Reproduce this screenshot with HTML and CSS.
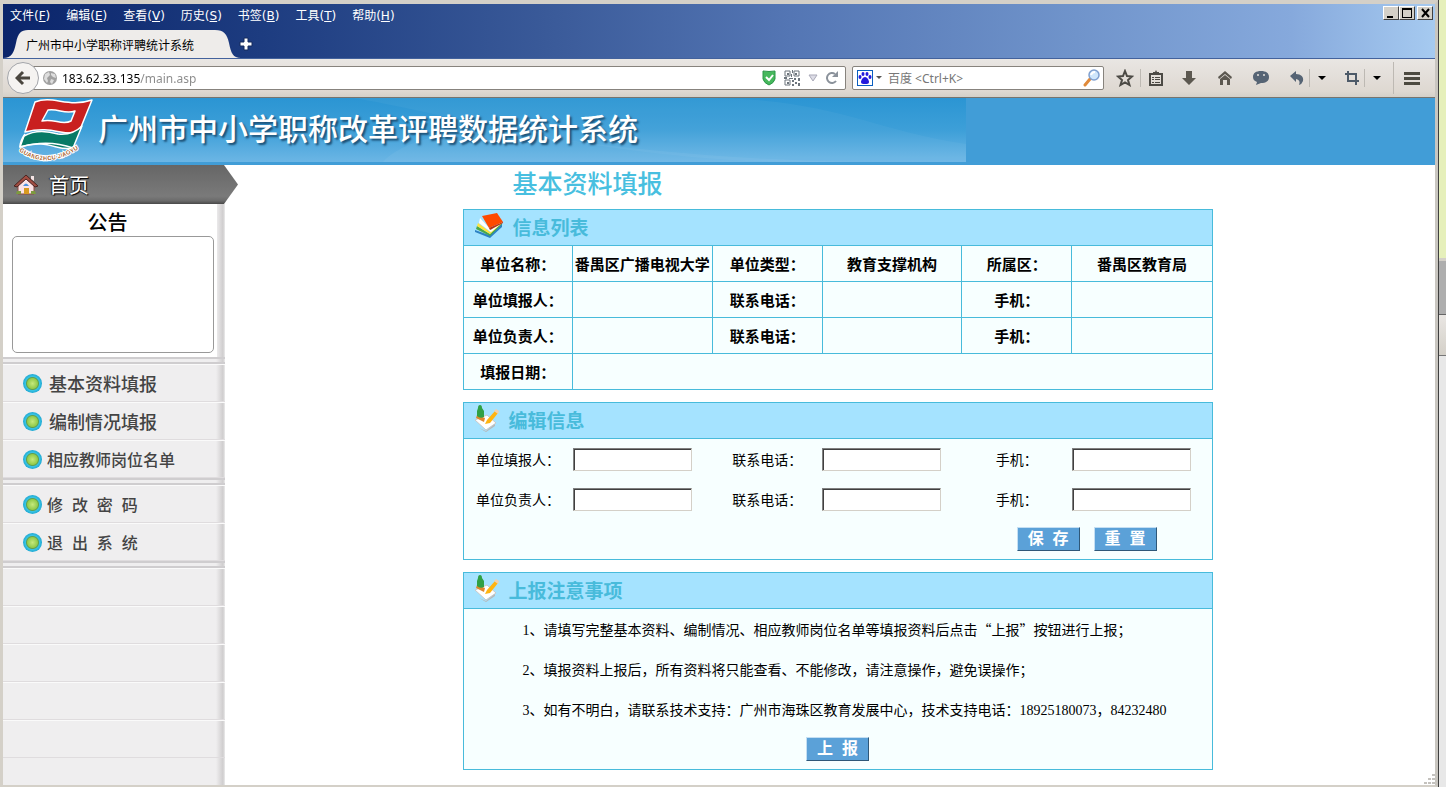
FILE: index.html
```html
<!DOCTYPE html>
<html lang="zh-CN">
<head>
<meta charset="utf-8">
<title>广州市中小学职称评聘统计系统</title>
<link rel="stylesheet" href="styles.css">
</head>
<body>
<div class="window">
<div class="titlebar">
    <div class="menu-row">
        <div class="menu">
            <button type="button">文件(<u>F</u>)</button>
            <button type="button">编辑(<u>E</u>)</button>
            <button type="button">查看(<u>V</u>)</button>
            <button type="button">历史(<u>S</u>)</button>
            <button type="button">书签(<u>B</u>)</button>
            <button type="button">工具(<u>T</u>)</button>
            <button type="button">帮助(<u>H</u>)</button>
        </div>
        <div class="window-buttons">
            <button type="button" aria-label="最小化"><svg width="12" height="10"><path d="M2 8h6v2H2z"/></svg></button>
            <button type="button" aria-label="最大化"><svg width="12" height="10"><path d="M1 0h10v10H1zM2 2v7h8V2z" fill-rule="evenodd"/></svg></button>
            <button type="button" class="close" aria-label="关闭"><svg width="12" height="10"><path d="M3 1l7 8M10 1l-7 8" stroke="#000" stroke-width="2"/></svg></button>
        </div>
    </div>
    <div class="tab-row">
        <button type="button" class="tab">
            <svg class="tab-shape" viewBox="0 0 238 28"><path d="M0 28C9 28 11 22 13 13C15 3 18 0 25 0H212C221 0 224 4 226 13C228 23 230 28 238 28Z" fill="#eeecea"/></svg>
            <span>广州市中小学职称评聘统计系统</span>
        </button>
        <button type="button" class="new-tab" aria-label="新标签页"><svg width="14" height="14"><path d="M5 1h4v4h4v4H9v4H5V9H1V5h4z" fill="#fff" stroke="#142a5c"/></svg></button>
    </div>
</div>

<div class="toolbar">
    <button type="button" class="back" aria-label="后退"><svg width="16" height="16"><path d="M8 2L2 8l6 6M3 8h12" fill="none" stroke="#4a463f" stroke-width="3"/></svg></button>
    <div class="field url-field">
        <svg width="14" height="14"><circle cx="7" cy="7" r="7" fill="#a0a0a0"/><path d="M2 3l4-2 1 3-3 3 1 3-1 2-3-4zM8 2l4 1 1 4-3-1-2-2zM8 8l3 1-2 4-2-2z" fill="#ddd"/></svg>
        <input type="text" class="url" aria-label="地址" value="183.62.33.135/main.asp">
        <svg width="14" height="16"><path d="M1 1Q7 2 13 1V9Q12 13 7 15Q2 13 1 9Z" fill="#46b85c" stroke="#2b9648"/><path d="M4 7l3 3 4-5" fill="none" stroke="#fff" stroke-width="2"/></svg>
        <svg width="16" height="16" viewBox="0 0 16 16"><path d="M1 1h5v5H1zM10 1h5v5h-5zM1 10h5v5H1z" fill="none" stroke="#6d757d" stroke-width="1"/><path d="M3 3h2v2H3zM11 3h2v2h-2zM3 12h2v2H3zM8 0h1v3H8zM7 4h1v3H7zM0 7h3v2H0zM5 8h4v1H5zM10 8h2v2h-2zM14 8h2v3h-2zM8 10h2v2H8zM11 12h2v2h-2zM8 14h2v2H8zM14 13h2v3h-2z" fill="#6d757d"/></svg>
        <svg width="10" height="8"><path d="M1 1h8L5 7z" fill="#dcdce6" stroke="#a9a9b8"/></svg>
        <svg class="reload" width="14" height="14"><path d="M10 10A5 5 0 1 1 9 3" fill="none" stroke="#8b929b" stroke-width="2"/><path d="M12 0v6H6z" fill="#8b929b"/></svg>
    </div>
    <div class="field search-field">
        <button type="button" class="engine" aria-label="搜索引擎">
            <svg width="16" height="16"><path d="M0 0h16v16H0z" fill="#0a5fc0"/><path d="M1 1h14v14H1z" fill="#fff"/><g fill="#2319dc"><ellipse cx="6" cy="4" rx="1.5" ry="2"/><ellipse cx="10" cy="4" rx="1.5" ry="2"/><ellipse cx="3" cy="7" rx="1.5" ry="2"/><ellipse cx="13" cy="7" rx="1.5" ry="2"/><path d="M8 7c2 0 4 3 4 5s-2 2-4 2-4 0-4-2 2-5 4-5z"/></g></svg>
            <svg width="6" height="4"><path d="M0 0h6L3 3z" fill="#555"/></svg>
        </button>
        <input type="text" aria-label="搜索" placeholder="百度 &lt;Ctrl+K&gt;">
        <svg width="18" height="18"><path d="M2 16l5-6" stroke="#e08a3a" stroke-width="3" stroke-linecap="round"/><circle cx="11" cy="6" r="5" fill="#cfe6fb" stroke="#7f9fcf" stroke-width="1.500"/><path d="M8 6q1-3 4-3" fill="none" stroke="#fff" stroke-width="2"/></svg>
    </div>
    <button type="button" class="tool tool-star" aria-label="收藏"><svg width="18" height="18"><path d="M9 2l2 5 5 .5-4 3.500 1.500 5L9 13.500 4.500 16 6 11 2 7.500 7 7z" fill="none" stroke="#4c4a45" stroke-width="2"/></svg></button>
    <i class="sep"></i>
    <button type="button" class="tool tool-list" aria-label="书签列表"><svg width="16" height="16"><path d="M2 4h12v11H2z" fill="none" stroke="#4c4a45" stroke-width="2"/><path d="M5 2h2l1-2 1 2h2v3H5zM4 7h2v1H4zM7 7h5v1H7zM4 9h2v1H4zM7 9h5v1H7zM4 12h2v1H4zM7 12h5v1H7z" fill="#4c4a45"/></svg></button>
    <button type="button" class="tool" aria-label="下载"><svg width="16" height="16"><path d="M5 1h6v7h4l-7 7-7-7h4z" fill="#5c5850"/></svg></button>
    <button type="button" class="tool" aria-label="主页"><svg width="16" height="16"><path d="M8 1l7 6-1 2-6-5-6 5-1-2z" fill="#5c5850"/><path d="M8 5l5 4v6h-3v-5H6v5H3V9z" fill="#5c5850"/></svg></button>
    <button type="button" class="tool" aria-label="聊天"><svg width="18" height="16"><path d="M9 1c5 0 8 2 8 6s-3 6-8 6l-5 2 1-3C2 11 1 9 1 7c0-4 3-6 8-6z" fill="#566474"/><circle cx="6" cy="5" r="1" fill="#e4e0dc"/><circle cx="12" cy="5" r="1" fill="#e4e0dc"/></svg></button>
    <button type="button" class="tool tool-split" aria-label="撤销"><svg width="16" height="16"><path d="M1 6l6-5v3c5 0 8 3 7 7q-1 3-4 4 2-5-3-6v3z" fill="#566474"/></svg></button>
    <i class="sep"></i>
    <button type="button" class="caret" aria-label="更多撤销"><svg width="8" height="5"><path d="M0 0h8L4 4z"/></svg></button>
    <button type="button" class="tool tool-split" aria-label="截图"><svg width="16" height="16"><path d="M4 1v10h11M1 4h11v11" fill="none" stroke="#4d5a68" stroke-width="2"/></svg></button>
    <i class="sep"></i>
    <button type="button" class="caret" aria-label="更多截图"><svg width="8" height="5"><path d="M0 0h8L4 4z"/></svg></button>
    <i class="sep sep-tall"></i>
    <button type="button" class="tool" aria-label="菜单"><svg width="16" height="13"><path d="M0 0h16v3H0zM0 5h16v3H0zM0 10h16v3H0z" fill="#4c4a40"/></svg></button>
</div>

<div class="page">
    <div class="banner">
        <div class="banner-picture">
            <svg class="banner-waves" viewBox="0 0 963 64" preserveAspectRatio="none"><path d="M350 0C430 12 600 64 800 64H963V46C860 30 830 0 700 0Z" fill="#fff" opacity=".04"/><path d="M480 30Q680 62 860 64H380Q400 40 480 30Z" fill="#fff" opacity=".05"/></svg>
            <svg class="logo" viewBox="0 0 80 64" width="80" height="64">
                <g stroke="#fff" stroke-width="1.500" stroke-linejoin="round">
                    <path d="M17 4C35-3 50 10 74 2L61 34C45 39 35 27 7 34ZM30 12L24 23C36 20 44 28 53 23L57 13C47 17 40 10 30 12Z" fill="#c9201f" fill-rule="evenodd"/>
                    <path d="M6 38C18 31 30 33 40 36C50 37 58 34 64 28L55 50C40 54 30 40 2 49Z" fill="#087a66"/>
                    <path d="M7 36Q2 43 2 49Q30 41 55 50" fill="none"/>
                </g>
                <path id="logo-arc" d="M1 53Q30 74 66 47" fill="none"/>
                <text class="logo-text"><textPath href="#logo-arc">GUANGZHOU·JIAOYU</textPath></text>
            </svg>
            <h1>广州市中小学职称改革评聘数据统计系统</h1>
        </div>
    </div>
    <div class="columns">
        <div class="sidebar">
            <a class="home" href="#">
                <svg width="26" height="22" viewBox="0 0 26 22"><path d="M5 10l8-8 8 8v10H5z" fill="#fbe3e6" stroke="#8d4a42"/><path d="M1 12L13 1l12 11-3 1-9-8-9 8z" fill="#a04d42" stroke="#4a2320"/><path d="M18 2h3v5l-3-2z" fill="#f4e4e4"/><path d="M11 14h5v6h-5z" fill="#d89a20"/><path d="M10 12q3-5 6 0z" fill="#4d93e0"/><path d="M3 20h5v-3H4zM18 20h5l-1-3h-4z" fill="#7d9b3f"/></svg>
                首页
            </a>
            <div class="sidebar-body">
                <div class="notice">
                    <h2>公告</h2>
                    <div class="notice-box"></div>
                </div>
                <ul class="nav">
                    <li><a class="large" href="#"><i class="dot"></i>基本资料填报</a></li>
                    <li><a class="large" href="#"><i class="dot"></i>编制情况填报</a></li>
                    <li><a href="#"><i class="dot"></i>相应教师岗位名单</a></li>
                </ul>
                <ul class="nav">
                    <li><a href="#"><i class="dot"></i>修&nbsp;&nbsp;改&nbsp;&nbsp;密&nbsp;&nbsp;码</a></li>
                    <li><a href="#"><i class="dot"></i>退&nbsp;&nbsp;出&nbsp;&nbsp;系&nbsp;&nbsp;统</a></li>
                </ul>
                <ul class="nav">
                    <li></li>
                    <li></li>
                    <li></li>
                    <li></li>
                    <li></li>
                </ul>
            </div>
        </div>

        <div class="main">
            <h2 class="page-title">基本资料填报</h2>

            <div class="panel">
                <h3>
                    <svg width="30" height="28" viewBox="0 0 30 28"><path d="M1 19l14 5 13-12v4L16 27 1 21z" fill="#2c82c4"/><path d="M3 15l13 8 12-12v2L16 25 2 18z" fill="#4aa84a"/><path d="M4 12l12 9 12-11v2L16 23 3 15z" fill="#ffe43a"/><path d="M6 7l11 12 11-9v2L17 21 5 12z" fill="#fff"/><path d="M8 5l15-3 6 9-14 6z" fill="#ff4a00"/><path d="M15 17l14-6v1l-13 7z" fill="#b93010"/></svg>
                    <span>信息列表</span>
                </h3>
                <table class="info">
                    <colgroup><col class="col-first"><col><col class="col-label"><col><col class="col-label"><col></colgroup>
                    <tr>
                        <th>单位名称：</th><td>番禺区广播电视大学</td>
                        <th>单位类型：</th><td>教育支撑机构</td>
                        <th>所属区：</th><td>番禺区教育局</td>
                    </tr>
                    <tr>
                        <th>单位填报人：</th><td></td>
                        <th>联系电话：</th><td></td>
                        <th>手机：</th><td></td>
                    </tr>
                    <tr>
                        <th>单位负责人：</th><td></td>
                        <th>联系电话：</th><td></td>
                        <th>手机：</th><td></td>
                    </tr>
                    <tr>
                        <th>填报日期：</th><td colspan="5"></td>
                    </tr>
                </table>
            </div>

            <form class="panel">
                <h3>
                    <svg width="26" height="28" viewBox="0 0 26 28"><path d="M1 16l12-5 9 8-10 7z" fill="#fff" stroke="#c9c9c9"/><path d="M5 24l7 3 9-7v2l-9 6z" fill="#b8b8b8"/><path d="M3 11l8 3-1 4-8-4z" fill="#e0872c"/><path d="M4 4q0-3 2-3t2 3l2 3v6q-4 2-7-1V7z" fill="#2fa045"/><path d="M13 16l8-9 3 2-8 10-5 1z" fill="#ffb412"/><path d="M20 7l2-2 3 2-1 3z" fill="#f3cfae"/></svg>
                    <span>编辑信息</span>
                </h3>
                <div class="fields">
                    <label for="reporter">单位填报人：</label><input type="text" id="reporter">
                    <label for="reporter-tel">联系电话：</label><input type="text" id="reporter-tel">
                    <label for="reporter-mobile">手机：</label><input type="text" id="reporter-mobile">
                    <label for="leader">单位负责人：</label><input type="text" id="leader">
                    <label for="leader-tel">联系电话：</label><input type="text" id="leader-tel">
                    <label for="leader-mobile">手机：</label><input type="text" id="leader-mobile">
                </div>
                <div class="actions actions-right">
                    <button type="button" class="btn">保&nbsp;&nbsp;存</button>
                    <button type="reset" class="btn">重&nbsp;&nbsp;置</button>
                </div>
            </form>

            <div class="panel">
                <h3>
                    <svg width="26" height="28" viewBox="0 0 26 28"><path d="M1 16l12-5 9 8-10 7z" fill="#fff" stroke="#c9c9c9"/><path d="M5 24l7 3 9-7v2l-9 6z" fill="#b8b8b8"/><path d="M3 11l8 3-1 4-8-4z" fill="#e0872c"/><path d="M4 4q0-3 2-3t2 3l2 3v6q-4 2-7-1V7z" fill="#2fa045"/><path d="M13 16l8-9 3 2-8 10-5 1z" fill="#ffb412"/><path d="M20 7l2-2 3 2-1 3z" fill="#f3cfae"/></svg>
                    <span>上报注意事项</span>
                </h3>
                <div class="notes">
                    <p><span class="num">1</span>、请填写完整基本资料、编制情况、相应教师岗位名单等填报资料后点击“上报”按钮进行上报；</p>
                    <p><span class="num">2</span>、填报资料上报后，所有资料将只能查看、不能修改，请注意操作，避免误操作；</p>
                    <p><span class="num">3</span>、如有不明白，请联系技术支持：广州市海珠区教育发展中心，技术支持电话：<span class="num">18925180073</span>，<span class="num">84232480</span></p>
                </div>
                <div class="actions">
                    <button type="button" class="btn">上&nbsp;&nbsp;报</button>
                </div>
            </div>
        </div>
    </div>
    <svg class="grip" width="12" height="10"><path d="M9 0h3v2H9zM5 4h3v2H5zM9 4h3v2H9zM1 8h3v2H1zM5 8h3v2H5zM9 8h3v2H9z" fill="#c4c2be"/></svg>
</div>
</div>

<!-- the edge of the window behind -->
<div class="behind">
    <div class="behind-top"></div>
    <div class="behind-title"></div>
    <div class="behind-toolbar"></div>
</div>
</body>
</html>
```

FILE: styles.css
```css
* { box-sizing: border-box; }
body {
    margin: 0; min-height: 100vh; display: flex; background: #e8e8e8;
    font-family: "Liberation Sans", "Noto Sans CJK SC", sans-serif; font-size: 14px; color: #000;
}
h1, h2, h3, p, ul { margin: 0; padding: 0; }
button { margin: 0; padding: 0; border: 0; background: none; font-family: inherit; }
svg { display: block; flex: none; }
a { text-decoration: none; }

/* browser window */
.window { flex: 1; display: flex; flex-direction: column; border: solid #d4d0c8; border-width: 4px 3px 2px 3px; border-right-color: #c9c6c0; }
.titlebar { background: linear-gradient(to right, #0a246a 0%, #1d3c80 18%, #3a5a99 38%, #5476b4 55%, #7094cb 75%, #86a9dc 90%, #a6caf0 100%); border-bottom: 1px solid #43629c; }
.menu-row { display: flex; justify-content: space-between; height: 26px; }
.menu { display: flex; gap: 16px; padding-left: 7px; height: 20px; }
.menu button { font: 12px "DejaVu Sans", "Noto Sans CJK SC", sans-serif; color: #fff; }
.window-buttons { display: flex; padding: 2px 2px 0 0; }
.window-buttons button { width: 16px; height: 14px; padding: 1px; background: #d4d0c8; border: 1px solid; border-color: #fff #404040 #404040 #fff; }
.window-buttons .close { margin-left: 2px; }
.tab-row { display: flex; align-items: center; height: 28px; }
.tab { position: relative; width: 238px; height: 28px; padding-left: 23px; text-align: left; font-size: 12px; }
.tab-shape { position: absolute; left: 0; top: 0; width: 100%; height: 100%; }
.tab span { position: relative; }
.new-tab { margin-left: -2px; }

.toolbar { display: flex; align-items: center; height: 39px; padding: 0 5px 0 4px; background: linear-gradient(#e9e6e3, #ded8d1 85%, #d4d0c8); border-bottom: 1px solid #77746e; }
.back { position: relative; z-index: 1; display: flex; align-items: center; justify-content: center; width: 32px; height: 32px; background: #f5f3f1; border: 1px solid #a3a5aa; border-radius: 50%; }
.field { display: flex; align-items: center; height: 24px; background: #fff; border: 1px solid #87837d; border-radius: 2px; }
.field input { flex: 1; min-width: 0; height: 20px; padding: 0; border: 0; outline: 0; background: none; font: 12px "Noto Sans", "Noto Sans CJK SC", sans-serif; }
.url-field { flex: 1; margin-left: -8px; padding: 0 5px 0 11px; gap: 8px; }
/* host in black, path in grey */
.field .url { margin-left: -3px; background: linear-gradient(to right, #000 78px, #8a8a8a 78px); -webkit-background-clip: text; background-clip: text; color: transparent; }
.search-field { width: 252px; margin-left: 6px; padding: 0 2px 0 4px; }
.search-field input::placeholder { color: #777; opacity: 1; }
.engine { display: flex; align-items: center; gap: 3px; margin-right: 6px; }
.tool, .caret { display: flex; align-items: center; justify-content: center; height: 30px; width: 36px; }
.tool-star { width: 30px; margin-left: 6px; }
.tool-list { width: 30px; }
.tool-split { width: 24px; margin-left: 6px; }
.caret { width: 24px; }
.sep { width: 1px; height: 18px; background: #bdb9b3; }
.sep-tall { height: 32px; margin-left: 4px; }

/* page */
.page { position: relative; flex: 1; display: flex; flex-direction: column; background: #fff; }
.grip { position: absolute; right: 0; bottom: 1px; }
.banner { height: 67px; padding-bottom: 3px; background: #419dd7; }
.banner-picture { position: relative; display: flex; align-items: center; max-width: 963px; height: 64px; padding-left: 15px; background: linear-gradient(#2b95d3, #3d9fd8 50%, #6cb6e5); }
.banner-waves { position: absolute; left: 0; top: 0; width: 100%; height: 100%; }
.logo { position: relative; }
.logo-text { font-size: 6px; font-weight: bold; fill: #a8622c; stroke: #fff; stroke-width: 2px; paint-order: stroke; }
.banner h1 { position: relative; font-size: 30px; font-weight: 500; line-height: 64px; color: #fff; white-space: nowrap; text-shadow: 2px 2px 2px #1c4f74; }
.columns { flex: 1; display: flex; }

.sidebar { flex: none; display: flex; flex-direction: column; width: 237px; }
.home {
    display: flex; align-items: center; gap: 10px; width: 235px; height: 39px; padding-left: 10px;
    background: linear-gradient(#666, #7a7a7a 80%, #6a6a6a 92%, #484848);
    clip-path: polygon(0 0, 221px 0, 100% 50%, 221px 100%, 0 100%);
    font-size: 20px; color: #fff; text-shadow: 1px 1px 1px #000, -1px 0 1px #222;
}
.sidebar-body { flex: 1; width: 222px; background: linear-gradient(to right, transparent 213px, #cfcdce 220px, #ececec 222px), #efeeef; }
.notice { height: 153px; padding: 6px 0 0 9px; margin-right: 8px; background: #fff; }
.notice h2 { padding-right: 14px; font-size: 20px; font-weight: 500; line-height: 26px; text-align: center; }
.notice-box { width: 202px; height: 117px; border: 1px solid #999; border-radius: 5px; background: #fff; }
.nav { list-style: none; border-top: 7px double #cfcdcf; }
.nav li { height: 38px; border-top: 1px solid #fafafa; border-bottom: 1px solid #dfdcde; }
.nav a { display: flex; align-items: center; gap: 5px; height: 36px; padding-left: 20px; font-size: 16px; font-weight: 500; color: #444; }
.nav .large { gap: 7px; font-size: 18px; }
.dot { width: 19px; height: 19px; border-radius: 50%; background: radial-gradient(circle at 50% 50%, #c5e97c 0, #93cb4c 5px, #5f9f50 6px, #38c4e4 7px, #1ba2cf 10px); }

.main { flex: 1; min-width: 0; padding-bottom: 3px; }
.page-title { width: 100%; max-width: 750px; margin: 0 auto; padding: 0 0 6px 50px; font-size: 25px; font-weight: 500; line-height: 38px; color: #48bfe0; }
.panel { width: 100%; max-width: 750px; margin: 0 auto 12px auto; background: #f7ffff; border: 1px solid #48bbdb; }
.panel h3 { display: flex; align-items: flex-start; gap: 9px; height: 36px; padding: 1px 0 0 10px; background: #a5e3ff; border-bottom: 1px solid #48bbdb; font-size: 19px; font-weight: bold; line-height: 36px; color: #48bbdb; }
.info { width: 100%; border-collapse: collapse; table-layout: fixed; }
.info th, .info td { height: 36px; padding: 0; border: 1px solid #48bbdb; font-size: 15px; font-weight: bold; text-align: center; white-space: nowrap; }
.info tr th:first-child { border-left: 0; }
.info tr td:last-child { border-right: 0; }
.info tr:first-child > * { height: 35px; border-top: 0; }
.info tr:last-child > * { border-bottom: 0; }
.col-label { width: 110px; }
.col-first { width: 109px; }
.fields { display: grid; grid-template-columns: 109px 1fr 110px 1fr 110px 1fr; grid-auto-rows: 40px; align-items: center; }
.fields label { text-align: center; }
.fields input { width: 119px; height: 23px; padding: 0 2px; background: #fff; border: solid; border-width: 1px; border-color: #808080 #d4d0c8 #d4d0c8 #808080; border-radius: 0; box-shadow: inset 1px 1px #404040; }
.actions { display: flex; justify-content: center; align-items: center; gap: 14px; height: 40px; }
.actions-right { justify-content: flex-end; padding-right: 55px; }
.btn { height: 24px; padding: 0 10px; background: #5ba1d8; border: 1px solid; border-color: #c4dff3 #2f5878 #2f5878 #c4dff3; font-size: 16px; font-weight: bold; line-height: 22px; color: #fff; }
.notes { padding-left: 59px; }
.notes p { line-height: 40px; font-family: "Noto Sans CJK SC", sans-serif; }
.num { font-family: "Liberation Serif", serif; line-height: 1; }

.behind { flex: none; width: 8px; display: flex; flex-direction: column; border-left: 1px solid #404040; background: #e8e8e8; }
.behind-top { height: 258px; background: #e6f0bb; }
.behind-title { height: 57px; background: #aeaeae; border-top: 3px solid #d4d0c8; border-bottom: 1px solid #666; }
.behind-toolbar { height: 41px; background: linear-gradient(#e9e6e3, #d4d0c8); border-bottom: 1px solid #777; }
```
